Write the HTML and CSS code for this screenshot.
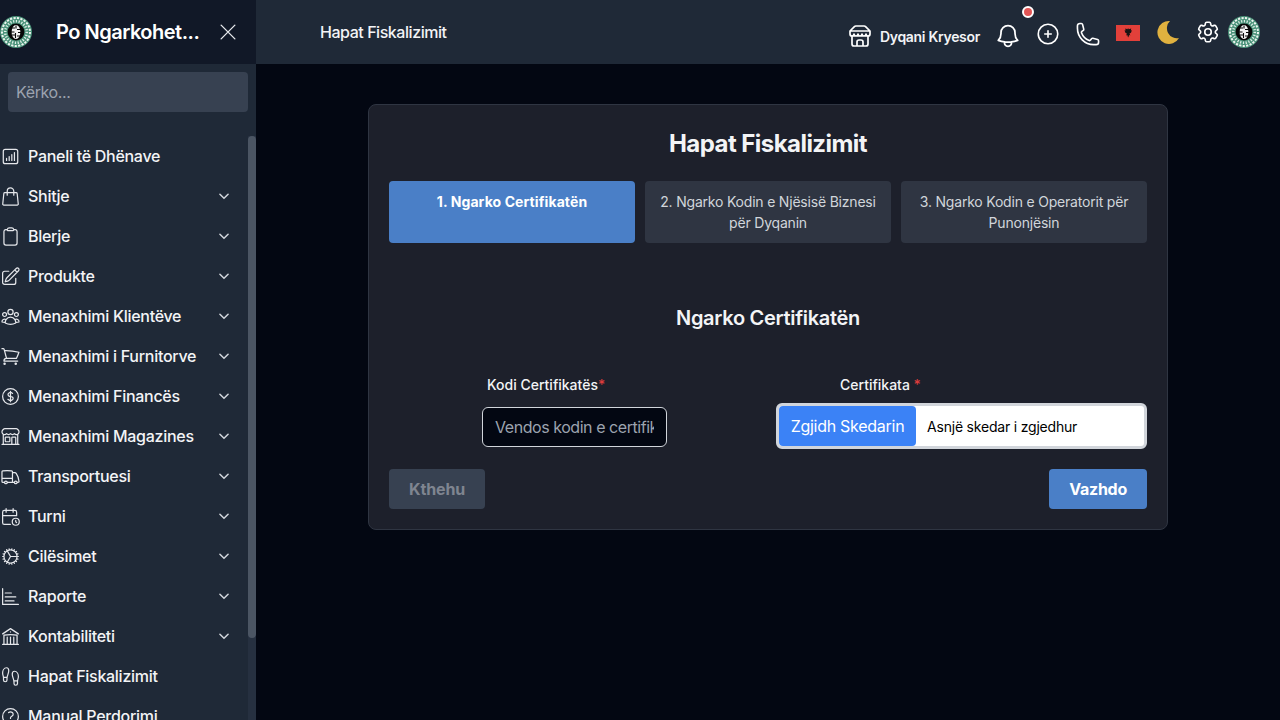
FILE: index.html
```html
<!DOCTYPE html>
<html lang="sq">
<head>
  <meta charset="UTF-8">
  <meta name="viewport" content="width=device-width, initial-scale=1.0">
  <title>Hapat Fiskalizimit</title>
  <link rel="stylesheet" href="styles.css">
</head>
<body>
  <!-- shared drawings -->
  <svg class="defs" aria-hidden="true">
    <symbol id="logo" viewBox="0 0 32 32">
      <circle cx="16" cy="16" r="16" fill="#4a9279"/>
      <circle cx="16" cy="16" r="14" fill="none" stroke="#eef5f0" stroke-width="2" stroke-dasharray="2.2 1.3"/>
      <circle cx="16" cy="16" r="10.8" fill="none" stroke="#dfeee7" stroke-width="2.6" stroke-dasharray="1.2 1.6"/>
      <circle cx="16" cy="16" r="8.4" fill="#070707"/>
      <ellipse cx="16" cy="16" rx="4.4" ry="7" fill="#f4f4f4"/>
      <path d="M11 12h4M17 13.5h4M11 16h3.5M18 16.5h3M12 19h3M17 20h3M16 9.5v3M15.5 17v5" stroke="#070707" stroke-width="1.1" fill="none"/>
    </symbol>
    <symbol id="chev" viewBox="0 0 24 24">
      <path d="m5 9 7 7 7-7" fill="none" stroke="currentColor" stroke-width="2.6" stroke-linecap="round" stroke-linejoin="round"/>
    </symbol>
  </svg>

  <aside class="sidebar">
    <div class="brand">
      <svg class="logo"><use href="#logo"/></svg>
      <span class="brand-name">Po Ngarkohet...</span>
      <svg class="close" viewBox="0 0 24 24"><path d="M4.5 4.5l15 15m0-15l-15 15"/></svg>
    </div>
    <div class="search">
      <input type="text" placeholder="Kërko...">
    </div>
    <nav class="menu">
      <a class="menu-item"><svg class="ico" viewBox="0 0 24 24"><path d="M7.5 14.25v2.25m3-4.5v4.5m3-6.75v6.75m3-9v9M6 20.25h12A2.25 2.25 0 0 0 20.25 18V6A2.25 2.25 0 0 0 18 3.75H6A2.25 2.25 0 0 0 3.75 6v12A2.25 2.25 0 0 0 6 20.25Z"/></svg><span>Paneli të Dhënave</span></a>
      <a class="menu-item"><svg class="ico" viewBox="0 0 24 24"><path d="M15.75 10.5V6a3.75 3.75 0 1 0-7.5 0v4.5m11.356-1.993 1.263 12c.07.665-.45 1.243-1.119 1.243H4.25a1.125 1.125 0 0 1-1.12-1.243l1.264-12A1.125 1.125 0 0 1 5.513 7.5h12.974c.576 0 1.059.435 1.119 1.007Z"/></svg><span>Shitje</span><svg class="chev"><use href="#chev"/></svg></a>
      <a class="menu-item"><svg class="ico" viewBox="0 0 24 24"><path d="M15.666 3.888A2.25 2.25 0 0 0 13.5 2.25h-3c-1.03 0-1.9.693-2.166 1.638m7.332 0c.055.194.084.4.084.612v0a.75.75 0 0 1-.75.75H9a.75.75 0 0 1-.75-.75v0c0-.212.03-.418.084-.612m7.332 0c.646.049 1.288.11 1.927.184 1.1.128 1.907 1.077 1.907 2.185V19.5a2.25 2.25 0 0 1-2.25 2.25H6.75A2.25 2.25 0 0 1 4.5 19.5V6.257c0-1.108.806-2.057 1.907-2.185a48.208 48.208 0 0 1 1.927-.184"/></svg><span>Blerje</span><svg class="chev"><use href="#chev"/></svg></a>
      <a class="menu-item"><svg class="ico" viewBox="0 0 24 24"><path d="m16.862 4.487 1.687-1.688a1.875 1.875 0 1 1 2.652 2.652L10.582 16.07a4.5 4.5 0 0 1-1.897 1.13L6 18l.8-2.685a4.5 4.5 0 0 1 1.13-1.897l8.932-8.931Zm0 0L19.5 7.125M18 14v4.75A2.25 2.25 0 0 1 15.75 21H5.25A2.25 2.25 0 0 1 3 18.75V8.25A2.25 2.25 0 0 1 5.25 6H10"/></svg><span>Produkte</span><svg class="chev"><use href="#chev"/></svg></a>
      <a class="menu-item"><svg class="ico" viewBox="0 0 24 24"><path d="M18 18.72a9.094 9.094 0 0 0 3.741-.479 3 3 0 0 0-4.682-2.72m.94 3.198.001.031c0 .225-.012.447-.037.666A11.944 11.944 0 0 1 12 21c-2.17 0-4.207-.576-5.963-1.584A6.062 6.062 0 0 1 6 18.719m12 0a5.971 5.971 0 0 0-.941-3.197m0 0A5.995 5.995 0 0 0 12 12.75a5.995 5.995 0 0 0-5.058 2.772m0 0a3 3 0 0 0-4.681 2.72 8.986 8.986 0 0 0 3.74.477m.94-3.197a5.971 5.971 0 0 0-.94 3.197M15 6.75a3 3 0 1 1-6 0 3 3 0 0 1 6 0Zm6 3a2.25 2.25 0 1 1-4.5 0 2.25 2.25 0 0 1 4.5 0Zm-13.5 0a2.25 2.25 0 1 1-4.5 0 2.25 2.25 0 0 1 4.5 0Z"/></svg><span>Menaxhimi Klientëve</span><svg class="chev"><use href="#chev"/></svg></a>
      <a class="menu-item"><svg class="ico" viewBox="0 0 24 24"><path d="M2.25 3h1.386c.51 0 .955.343 1.087.835l.383 1.437M7.5 14.25a3 3 0 0 0-3 3h15.75m-12.75-3h11.218c1.121-2.3 2.1-4.684 2.924-7.138a60.114 60.114 0 0 0-16.536-1.84M7.5 14.25 5.106 5.272M6 20.25a.75.75 0 1 1-1.5 0 .75.75 0 0 1 1.5 0Zm12.75 0a.75.75 0 1 1-1.5 0 .75.75 0 0 1 1.5 0Z"/></svg><span>Menaxhimi i Furnitorve</span><svg class="chev"><use href="#chev"/></svg></a>
      <a class="menu-item"><svg class="ico" viewBox="0 0 24 24"><path d="M12 6v12m-3-2.818.879.659c1.171.879 3.07.879 4.242 0 1.172-.879 1.172-2.303 0-3.182C13.536 12.219 12.768 12 12 12c-.725 0-1.45-.22-2.003-.659-1.106-.879-1.106-2.303 0-3.182s2.9-.879 4.006 0l.415.33M21 12a9 9 0 1 1-18 0 9 9 0 0 1 18 0Z"/></svg><span>Menaxhimi Financës</span><svg class="chev"><use href="#chev"/></svg></a>
      <a class="menu-item"><svg class="ico" viewBox="0 0 24 24"><path d="M13.5 21v-7.5a.75.75 0 0 1 .75-.75h3a.75.75 0 0 1 .75.75V21m-4.5 0H2.36m11.14 0H18m0 0h3.64m-1.39 0V9.349M3.75 21V9.349m0 0a3.001 3.001 0 0 0 3.75-.615A2.993 2.993 0 0 0 9.75 9.75c.896 0 1.7-.393 2.25-1.016a2.993 2.993 0 0 0 2.25 1.016c.896 0 1.7-.393 2.25-1.016a3.001 3.001 0 0 0 3.75.614m-16.5 0a3.004 3.004 0 0 1-.621-4.72l1.189-1.19A1.5 1.5 0 0 1 5.378 3h13.243a1.5 1.5 0 0 1 1.06.44l1.19 1.189a3 3 0 0 1-.621 4.72M6.75 18h3.75a.75.75 0 0 0 .75-.75V13.5a.75.75 0 0 0-.75-.75H6.75a.75.75 0 0 0-.75.75v3.75c0 .414.336.75.75.75Z"/></svg><span>Menaxhimi Magazines</span><svg class="chev"><use href="#chev"/></svg></a>
      <a class="menu-item"><svg class="ico" viewBox="0 0 24 24"><path d="M8.25 18.75a1.5 1.5 0 0 1-3 0m3 0a1.5 1.5 0 0 0-3 0m3 0h6m-9 0H3.375a1.125 1.125 0 0 1-1.125-1.125V14.25m17.25 4.5a1.5 1.5 0 0 1-3 0m3 0a1.5 1.5 0 0 0-3 0m3 0h1.125c.621 0 1.129-.504 1.09-1.124a17.902 17.902 0 0 0-3.213-9.193 2.056 2.056 0 0 0-1.58-.86H14.25M16.5 18.75h-2.25m0-11.177v-.958c0-.568-.422-1.048-.987-1.106a48.554 48.554 0 0 0-10.026 0 1.106 1.106 0 0 0-.987 1.106v7.635m12-6.677v6.677m0 4.5v-4.5m0 0h-12"/></svg><span>Transportuesi</span><svg class="chev"><use href="#chev"/></svg></a>
      <a class="menu-item"><svg class="ico" viewBox="0 0 24 24"><path d="M11.795 21h-6.795a2 2 0 0 1-2-2v-12a2 2 0 0 1 2-2h12a2 2 0 0 1 2 2v4M18 18m-4 0a4 4 0 1 0 8 0a4 4 0 1 0-8 0M15 3v4M7 3v4M3 11h16M18 16.496v1.504l1 1"/></svg><span>Turni</span><svg class="chev"><use href="#chev"/></svg></a>
      <a class="menu-item"><svg class="ico" viewBox="0 0 24 24"><path d="M4.5 12a7.5 7.5 0 0 0 15 0m-15 0a7.5 7.5 0 1 1 15 0m-15 0H3m16.5 0H21m-1.5 0H12m-8.457 3.077 1.41-.513m14.095-5.13 1.41-.513M5.106 17.785l1.15-.964m11.49-9.642 1.149-.964M7.501 19.795l.75-1.3m7.5-12.99.75-1.3m-6.063 16.658.26-1.477m2.605-14.772.26-1.477m0 17.726-.26-1.477M10.698 4.614l-.26-1.477M16.5 19.794l-.75-1.299M7.5 4.205 12 12m6.894 5.785-1.149-.964M6.256 7.178l-1.15-.964m15.352 8.864-1.41-.513M4.954 9.435l-1.41-.514M12.002 12l-3.75 6.495"/></svg><span>Cilësimet</span><svg class="chev"><use href="#chev"/></svg></a>
      <a class="menu-item"><svg class="ico" viewBox="0 0 24 24"><path d="M3 3v18h18M6 8h7M6 12.5h12M6 17h10"/></svg><span>Raporte</span><svg class="chev"><use href="#chev"/></svg></a>
      <a class="menu-item"><svg class="ico" viewBox="0 0 24 24"><path d="M12 21v-8.25M15.75 21v-8.25M8.25 21v-8.25M3 9l9-6 9 6m-1.5 12V10.332A48.36 48.36 0 0 0 12 9.75c-2.551 0-5.056.2-7.5.582V21M3 21h18M12 6.75h.008v.008H12V6.75Z"/></svg><span>Kontabiliteti</span><svg class="chev"><use href="#chev"/></svg></a>
      <a class="menu-item"><svg class="ico" viewBox="0 0 24 24"><path d="M4 16v-2.38C4 11.5 2.97 10.5 3 8c.03-2.72 1.49-6 4.5-6C9.37 2 10 3.8 10 5.5c0 3.11-2 5.66-2 8.68V16a2 2 0 1 1-4 0ZM20 20v-2.38c0-2.12 1.03-3.12 1-5.62-.03-2.72-1.49-6-4.5-6C14.63 6 14 7.8 14 9.5c0 3.11 2 5.66 2 8.68V20a2 2 0 1 0 4 0ZM16 17h4M4 13h4"/></svg><span>Hapat Fiskalizimit</span></a>
      <a class="menu-item"><svg class="ico" viewBox="0 0 24 24"><path d="M9.879 7.519c1.171-1.025 3.071-1.025 4.242 0 1.172 1.025 1.172 2.687 0 3.712-.203.179-.43.326-.67.442-.745.361-1.45.999-1.45 1.827v.75M21 12a9 9 0 1 1-18 0 9 9 0 0 1 18 0Zm-9 5.25h.008v.008H12v-.008Z"/></svg><span>Manual Perdorimi</span></a>
    </nav>
    <div class="scroll-track"><div class="scroll-thumb"></div></div>
  </aside>

  <div class="page">
    <header class="topbar">
      <span class="topbar-title">Hapat Fiskalizimit</span>
      <div class="shop">
        <svg class="shop-ico" viewBox="0 0 24 24"><path d="m2 7 4.41-4.41A2 2 0 0 1 7.83 2h8.34a2 2 0 0 1 1.42.59L22 7M4 12v8a2 2 0 0 0 2 2h12a2 2 0 0 0 2-2v-8M15 22v-4a2 2 0 0 0-2-2h-2a2 2 0 0 0-2 2v4M2 7h20M22 7v3a2 2 0 0 1-4 0 2 2 0 0 1-4 0 2 2 0 0 1-4 0 2 2 0 0 1-4 0 2 2 0 0 1-4 0V7"/></svg>
        <span>Dyqani Kryesor</span>
      </div>
      <div class="slot slot-bell">
        <svg class="tool tool-bell" viewBox="0 0 24 24"><path d="M14.857 17.082a23.848 23.848 0 0 0 5.454-1.31A8.967 8.967 0 0 1 18 9.75V9A6 6 0 0 0 6 9v.75a8.967 8.967 0 0 1-2.312 6.022c1.733.64 3.56 1.085 5.455 1.31m5.714 0a24.255 24.255 0 0 1-5.714 0m5.714 0a3 3 0 1 1-5.714 0"/></svg>
        <span class="dot"></span>
      </div>
      <div class="slot slot-low"><svg class="tool" viewBox="0 0 24 24"><path d="M12 9v6m3-3H9m12 0a9 9 0 1 1-18 0 9 9 0 0 1 18 0Z"/></svg></div>
      <div class="slot slot-low"><svg class="tool" viewBox="0 0 24 24"><path d="M2.25 6.75c0 8.284 6.716 15 15 15h2.25a2.25 2.25 0 0 0 2.25-2.25v-1.372c0-.516-.351-.966-.852-1.091l-4.423-1.106c-.44-.11-.902.055-1.173.417l-.97 1.293c-.282.376-.769.542-1.21.38a12.035 12.035 0 0 1-7.143-7.143c-.162-.441.004-.928.38-1.21l1.293-.97c.363-.271.527-.734.417-1.173L6.963 3.102a1.125 1.125 0 0 0-1.091-.852H4.5A2.25 2.25 0 0 0 2.25 4.5v2.25Z"/></svg></div>
      <div class="slot slot-flag">
        <svg class="flag" viewBox="0 0 24 16"><rect width="24" height="16" fill="#e2403a"/><path d="M12 3l.8 1.3 2.4-.9-.4 2.2 1.1-.3-.9 2.5-1.5.6.8 2-1.2-.4-.7 2.3h-.4l-.7-2.3-1.2.4.8-2-1.5-.6-.9-2.5 1.1.3-.4-2.2 2.4.9Z" fill="#1a1414"/></svg>
      </div>
      <div class="slot"><svg class="moon" viewBox="0 0 24 24"><path d="M14 1A11.5 11.5 0 1 0 23 18 10 10 0 0 1 14 1Z"/></svg></div>
      <div class="slot"><svg class="tool" viewBox="0 0 24 24"><path d="M9.594 3.94c.09-.542.56-.94 1.11-.94h2.593c.55 0 1.02.398 1.11.94l.213 1.281c.063.374.313.686.645.87.074.04.147.083.22.127.325.196.72.257 1.075.124l1.217-.456a1.125 1.125 0 0 1 1.37.49l1.296 2.247a1.125 1.125 0 0 1-.26 1.431l-1.003.827c-.293.241-.438.613-.43.992a7.723 7.723 0 0 1 0 .255c-.008.378.137.75.43.991l1.004.827c.424.35.534.955.26 1.43l-1.298 2.247a1.125 1.125 0 0 1-1.369.491l-1.217-.456c-.355-.133-.75-.072-1.076.124a6.47 6.47 0 0 1-.22.128c-.331.183-.581.495-.644.869l-.213 1.281c-.09.543-.56.94-1.11.94h-2.594c-.55 0-1.019-.398-1.11-.94l-.213-1.281c-.062-.374-.312-.686-.644-.87a6.52 6.52 0 0 1-.22-.127c-.325-.196-.72-.257-1.076-.124l-1.217.456a1.125 1.125 0 0 1-1.369-.49l-1.297-2.247a1.125 1.125 0 0 1 .26-1.431l1.004-.827c.292-.24.437-.613.43-.991a6.932 6.932 0 0 1 0-.255c.007-.38-.138-.751-.43-.992l-1.004-.827a1.125 1.125 0 0 1-.26-1.43l1.297-2.247a1.125 1.125 0 0 1 1.37-.491l1.216.456c.356.133.751.072 1.076-.124.072-.044.146-.086.22-.128.332-.183.582-.495.644-.869l.214-1.28ZM15 12a3 3 0 1 1-6 0 3 3 0 0 1 6 0Z"/></svg></div>
      <svg class="logo"><use href="#logo"/></svg>
    </header>

    <main class="content">
      <section class="card">
        <h1 class="card-title">Hapat Fiskalizimit</h1>
        <div class="steps">
          <div class="step active">1. Ngarko Certifikatën</div>
          <div class="step">2. Ngarko Kodin e Njësisë Biznesi për Dyqanin</div>
          <div class="step">3. Ngarko Kodin e Operatorit për Punonjësin</div>
        </div>
        <h2 class="section-title">Ngarko Certifikatën</h2>
        <div class="form-grid">
          <div class="field field-code">
            <label>Kodi Certifikatës<span class="req">*</span></label>
            <input type="text" placeholder="Vendos kodin e certifikatës">
          </div>
          <div class="field field-file">
            <label>Certifikata <span class="req">*</span></label>
            <div class="file-box">
              <span class="file-btn">Zgjidh Skedarin</span>
              <span class="file-name">Asnjë skedar i zgjedhur</span>
            </div>
          </div>
        </div>
        <div class="actions">
          <button class="btn btn-back">Kthehu</button>
          <button class="btn btn-next">Vazhdo</button>
        </div>
      </section>
    </main>
  </div>
</body>
</html>
```

FILE: styles.css
```css
* {
  box-sizing: border-box;
}
html, body {
  height: 100%;
}
body {
  margin: 0;
  display: flex;
  overflow: hidden;
  background: #030712;
  color: #fff;
  font-family: Inter, "Noto Sans", sans-serif;
}
.defs {
  display: none;
}

/* Sidebar */
.sidebar {
  position: relative;
  flex: 0 0 256px;
  height: 720px;
  display: flex;
  flex-direction: column;
  overflow: hidden;
  background: #1f2937;
}
.brand {
  flex: 0 0 64px;
  display: flex;
  align-items: center;
  background: #111827;
}
.logo {
  flex: 0 0 32px;
  width: 32px;
  height: 32px;
}
.brand-name {
  margin-left: 24px;
  width: 146px;
  font-size: 20px;
  font-weight: 600;
  letter-spacing: -0.5px;
  white-space: nowrap;
}
.close {
  width: 22px;
  height: 22px;
  margin-left: 15px;
  fill: none;
  stroke: #e5e7eb;
  stroke-width: 1.5;
  stroke-linecap: round;
}
.search {
  padding: 8px;
}
.search input {
  display: block;
  width: 240px;
  height: 40px;
  padding: 0 8px;
  border: 0;
  border-radius: 4px;
  background: #374151;
  color: #fff;
  font: 16px Inter, sans-serif;
  letter-spacing: -0.4px;
}
.search input::placeholder {
  color: #9ca3af;
}
.menu {
  padding-top: 16px;
  width: 248px;
}
.menu-item {
  display: flex;
  align-items: center;
  height: 40px;
  padding-right: 17px;
  font-size: 16px;
  font-weight: 500;
  letter-spacing: -0.28px;
  color: #f3f4f6;
}
.ico {
  flex: 0 0 21px;
  width: 21px;
  height: 21px;
  margin: 0 7.5px 0 -0.5px;
  fill: none;
  stroke: #e5e7eb;
  stroke-width: 1.4;
  stroke-linecap: round;
  stroke-linejoin: round;
}
.chev {
  width: 14px;
  height: 14px;
  margin-left: auto;
  color: #d1d5db;
}
.scroll-track {
  position: absolute;
  top: 136px;
  right: 0;
  bottom: 0;
  width: 8px;
  background: #263040;
}
.scroll-thumb {
  height: 502px;
  border-radius: 4px;
  background: #4b5563;
}

/* Top bar */
.page {
  flex: 1;
  min-width: 0;
  display: flex;
  flex-direction: column;
}
.topbar {
  flex: 0 0 64px;
  display: flex;
  align-items: center;
  padding: 0 20px 0 64px;
  background: #1f2937;
}
.topbar-title {
  font-size: 16px;
  font-weight: 500;
  letter-spacing: -0.45px;
  color: #f3f4f6;
}
.shop {
  display: flex;
  align-items: center;
  margin: 8px 8px 0 auto;
  font-size: 14px;
  font-weight: 600;
  letter-spacing: -0.3px;
  color: #f3f4f6;
}
.shop-ico {
  width: 24px;
  height: 24px;
  margin-right: 8px;
  fill: none;
  stroke: #fff;
  stroke-width: 1.7;
  stroke-linecap: round;
  stroke-linejoin: round;
}
.slot {
  position: relative;
  width: 40px;
  display: flex;
  justify-content: center;
  align-items: center;
}
.slot-bell {
  margin-top: 8px;
}
.slot-low {
  margin-top: 4px;
}
.slot-flag {
  margin-top: 2px;
}
.tool {
  width: 26px;
  height: 26px;
  fill: none;
  stroke: #fff;
  stroke-width: 1.5;
  stroke-linecap: round;
  stroke-linejoin: round;
}
.tool-bell {
  width: 28px;
  height: 28px;
}
.dot {
  position: absolute;
  top: -16px;
  left: 34px;
  width: 12px;
  height: 12px;
  border: 2px solid #fff;
  border-radius: 50%;
  background: #e25555;
}
.flag {
  width: 24px;
  height: 16px;
}
.moon {
  width: 24px;
  height: 24px;
  fill: #e0b13f;
}

/* Content */
.content {
  flex: 1;
  padding-top: 40px;
  display: flex;
  justify-content: center;
  align-items: flex-start;
}
.card {
  width: 800px;
  padding: 23px 20px 20px;
  border: 1px solid #2f3542;
  border-radius: 8px;
  background: #1d202b;
}
.card-title {
  margin: 0 0 21px;
  font-size: 24px;
  line-height: 32px;
  font-weight: 700;
  letter-spacing: -0.55px;
  text-align: center;
  color: #f3f4f6;
}
.steps {
  display: grid;
  grid-template-columns: repeat(3, 1fr);
  gap: 10px;
}
.step {
  padding: 10px 12px;
  min-height: 62px;
  border-radius: 4px;
  background: #2f3542;
  color: #d1d5db;
  font-size: 14px;
  line-height: 21px;
  letter-spacing: -0.2px;
  text-align: center;
}
.step.active {
  background: #4a7fc7;
  color: #fff;
  font-weight: 700;
  letter-spacing: 0.1px;
}
.section-title {
  margin: 61px 0 43px;
  font-size: 20px;
  line-height: 28px;
  font-weight: 600;
  letter-spacing: -0.3px;
  text-align: center;
  color: #f3f4f6;
}
.form-grid {
  display: grid;
  grid-template-columns: 1fr 1fr;
  gap: 16px;
}
.field label {
  display: block;
  font-size: 14px;
  line-height: 20px;
  font-weight: 500;
  color: #f3f4f6;
}
.req {
  color: #dc3c3c;
}
.field-code label {
  padding-left: 98px;
  margin-bottom: 12px;
}
.field-code input {
  display: block;
  width: 185px;
  height: 40px;
  margin-left: 93px;
  padding: 0 12px;
  border: 1px solid #d1d5db;
  border-radius: 6px;
  background: #030712;
  color: #fff;
  font: 16px Inter, sans-serif;
  letter-spacing: -0.45px;
}
.field-code input::placeholder {
  color: #9ca3af;
}
.field-file label {
  padding-left: 64px;
  margin-bottom: 8px;
}
.file-box {
  display: flex;
  align-items: center;
  height: 46px;
  border: 3px solid #d1d5db;
  border-radius: 6px;
  background: #fff;
}
.file-btn {
  width: 137px;
  height: 40px;
  line-height: 40px;
  border-radius: 4px;
  background: #3b82f6;
  color: #fff;
  font-size: 16px;
  letter-spacing: -0.27px;
  text-align: center;
}
.file-name {
  margin-left: 11px;
  font-size: 14px;
  letter-spacing: -0.2px;
  color: #000;
}
.actions {
  display: flex;
  justify-content: space-between;
  margin-top: 20px;
}
.btn {
  height: 40px;
  padding: 0 20px;
  border: 0;
  border-radius: 4px;
  font: 700 16px Inter, sans-serif;
  letter-spacing: -0.25px;
}
.btn-back {
  background: #374151;
  color: #7f8590;
  letter-spacing: -0.1px;
}
.btn-next {
  background: #4a7fc7;
  color: #fff;
}
```
